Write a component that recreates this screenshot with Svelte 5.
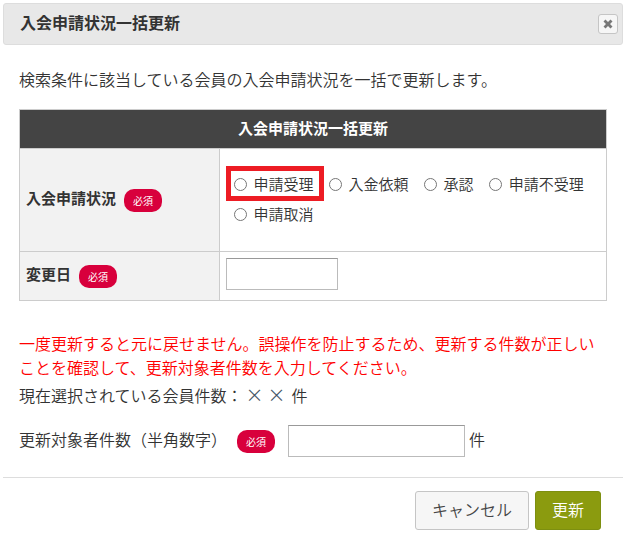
<script>
  const statuses = ['申請受理', '入金依頼', '承認', '申請不受理', '申請取消'];
  let status = $state('');
  let changeDate = $state('');
  let targetCount = $state('');
</script>

<div class="dialog" role="dialog" aria-labelledby="dialog-title">
  <header class="titlebar">
    <h1 id="dialog-title">入会申請状況一括更新</h1>
    <button type="button" class="close" aria-label="閉じる">
      <svg viewBox="0 0 10 10" width="10" height="10" aria-hidden="true">
        <path d="M2.5 0.5 5 3 7.5 0.5 9.5 2.5 7 5 9.5 7.5 7.5 9.5 5 7 2.5 9.5 0.5 7.5 3 5 0.5 2.5Z" fill="#777" />
      </svg>
    </button>
  </header>

  <form class="content" id="update-form">
    <p class="lead">検索条件に該当している会員の入会申請状況を一括で更新します。</p>

    <table>
      <colgroup>
        <col class="names" />
        <col />
      </colgroup>
      <thead>
        <tr><th colspan="2">入会申請状況一括更新</th></tr>
      </thead>
      <tbody>
        <tr class="status">
          <th scope="row" id="status-label">入会申請状況<span class="badge">必須</span></th>
          <td>
            <div class="radios" role="radiogroup" aria-labelledby="status-label">
              {#each statuses as name, i}
                <label class:marked={i === 0}>
                  <input type="radio" name="status" value={name} bind:group={status} />{name}
                </label>
              {/each}
            </div>
          </td>
        </tr>
        <tr class="date">
          <th scope="row"><label for="date">変更日</label><span class="badge">必須</span></th>
          <td><input class="text short" id="date" type="text" bind:value={changeDate} /></td>
        </tr>
      </tbody>
    </table>

    <p class="warning">一度更新すると元に戻せません。誤操作を防止するため、更新する件数が正しいことを確認して、更新対象者件数を入力してください。</p>
    <p class="selected">現在選択されている会員件数：<span class="number">× ×</span>件</p>
    <div class="count">
      <label for="count">更新対象者件数（半角数字）</label>
      <span class="badge">必須</span>
      <input class="text long" id="count" type="text" bind:value={targetCount} />
      <span class="unit">件</span>
    </div>
  </form>

  <footer>
    <button type="button" class="cancel">キャンセル</button>
    <button type="submit" form="update-form" class="submit">更新</button>
  </footer>
</div>

<style>
  :global(body) {
    background: #fff;
  }
  .dialog,
  .dialog * {
    box-sizing: border-box;
  }
  .dialog {
    padding: 3px 4px 0 3px;
    border-radius: 4px;
    color: #333;
    font-family: 'Noto Sans CJK JP', 'Noto Sans', sans-serif;
    font-size: 16px;
    font-weight: 350;
    line-height: 24px;
  }
  h1,
  p {
    margin: 0;
  }
  button,
  input {
    font: inherit;
    margin: 0;
  }
  .titlebar {
    display: flex;
    align-items: center;
    justify-content: space-between;
    height: 42px;
    padding: 0 4px 0 16px;
    border: 1px solid #ddd;
    border-radius: 3px;
    background: #e8e8e8;
  }
  h1 {
    padding-bottom: 4px;
    font-size: 16px;
    font-weight: 700;
  }
  .close {
    display: grid;
    place-items: center;
    width: 20px;
    height: 20px;
    padding: 0;
    border: 1px solid #c5c5c5;
    border-radius: 3px;
    background: #f6f6f6;
  }
  .content {
    padding: 22px 16px 20px;
  }
  table {
    width: 100%;
    margin: 18px 0 30px;
    border-collapse: collapse;
    table-layout: fixed;
    font-size: 15px;
  }
  .names {
    width: 34%;
  }
  th,
  td {
    padding: 6px;
    border: 1px solid #ccc;
    text-align: left;
  }
  thead th {
    height: 39px;
    padding: 4px 6px 6px;
    background: #444;
    color: #fff;
    text-align: center;
  }
  tbody th {
    padding: 4px 6px 6px;
    background: #f2f2f2;
    font-weight: 700;
  }
  .status {
    height: 103px;
  }
  .date {
    height: 49px;
  }
  .date td {
    vertical-align: top;
  }
  .badge {
    display: inline-block;
    margin-left: 8px;
    padding: 0 9px;
    border-radius: 10px;
    background: #d8003c;
    color: #fff;
    font-size: 10px;
    font-weight: 400;
    line-height: 23px;
    vertical-align: middle;
  }
  .radios {
    display: flex;
    flex-wrap: wrap;
    column-gap: 15px;
    padding: 0 8px 2px;
    line-height: 30px;
  }
  .radios label {
    position: relative;
    display: flex;
    align-items: center;
    gap: 7px;
  }
  .radios input {
    width: 13px;
    height: 13px;
  }
  .marked::after {
    content: '';
    position: absolute;
    inset: -3px -10px -2px -8px;
    border: 5px solid #ed1c24;
    pointer-events: none;
  }
  .text {
    display: block;
    height: 32px;
    padding: 0 6px;
    border: 1px solid #bbb;
    border-top-color: #999;
    border-radius: 0;
    background: #fff;
  }
  .short {
    width: 112px;
  }
  .long {
    width: 177px;
  }
  .warning {
    color: #f00;
  }
  .selected {
    margin-top: 4px;
  }
  .number {
    margin: 0 6px 0 3px;
    color: #456;
    font-size: 18px;
    line-height: 20px;
  }
  .count {
    display: flex;
    align-items: center;
    margin-top: 18px;
  }
  .count label,
  .unit {
    padding-bottom: 4px;
  }
  .count .badge {
    margin-left: 10px;
  }
  .count .text {
    margin: 0 4px 0 13px;
  }
  footer {
    display: flex;
    justify-content: flex-end;
    gap: 6px;
    padding: 13px 22px 16px;
    border-top: 1px solid #ddd;
  }
  footer button {
    height: 39px;
    padding: 0 16px 4px;
    border: 1px solid #c5c5c5;
    border-radius: 3px;
    background: #f6f6f6;
    color: #454545;
  }
  footer .submit {
    border-color: #7d8f10;
    background: #8b9b0f;
    color: #fff;
  }
</style>
